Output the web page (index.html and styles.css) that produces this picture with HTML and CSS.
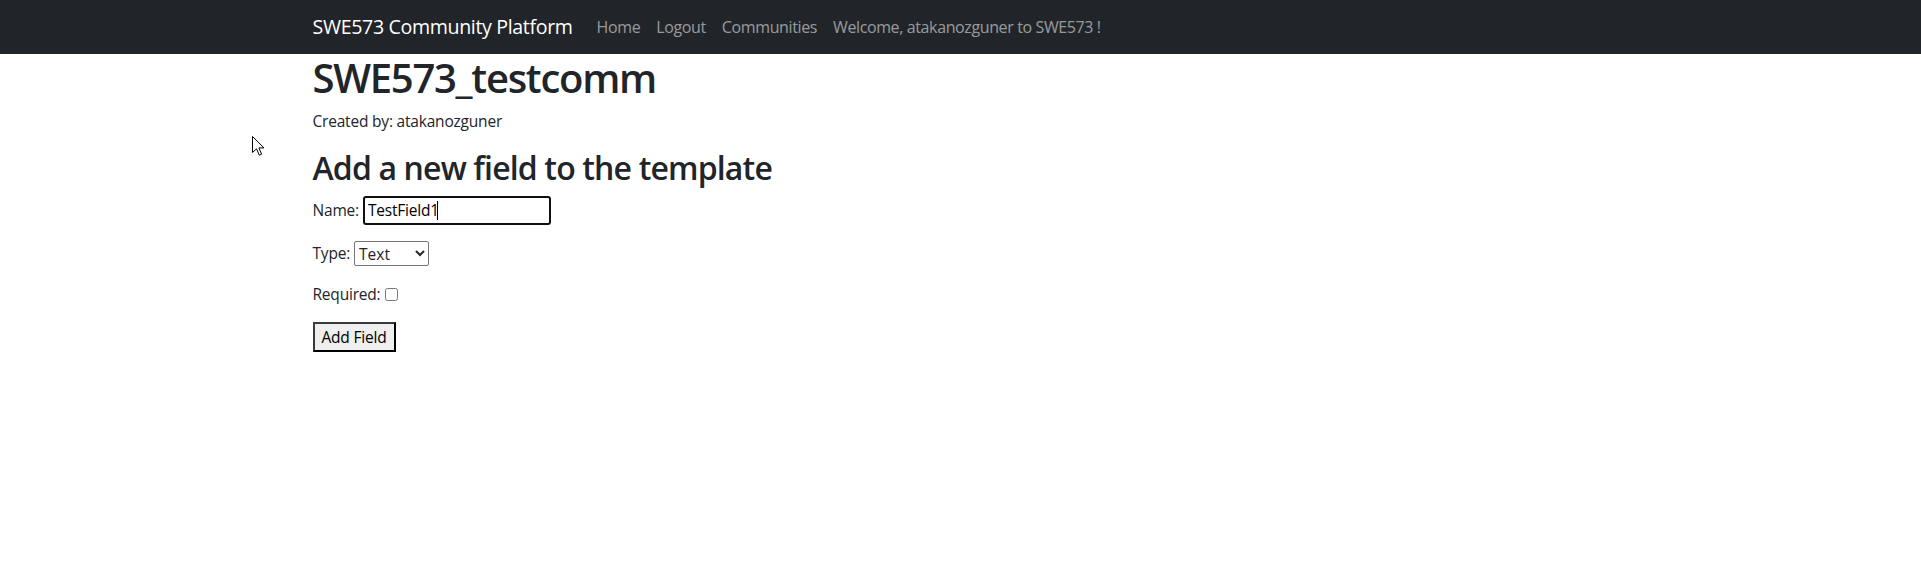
FILE: index.html
```html
<!DOCTYPE html>
<html lang="en">
<head>
<meta charset="utf-8">
<title>SWE573_testcomm</title>
<link rel="stylesheet" href="styles.css">
</head>
<body>
<nav class="navbar">
  <div class="container nav-inner">
    <a class="brand" href="#">SWE573 Community Platform</a>
    <a class="nav-link" href="#">Home</a>
    <a class="nav-link" href="#">Logout</a>
    <a class="nav-link" href="#">Communities</a>
    <span class="nav-link">Welcome, atakanozguner to SWE573 !</span>
  </div>
</nav>
<main class="container">
  <h1 class="title">SWE573_testcomm</h1>
  <p class="creator">Created by: atakanozguner</p>
  <h2 class="subtitle">Add a new field to the template</h2>
  <form class="field-form">
    <div class="row row-name">
      <label for="name">Name:</label>
      <span class="input-wrap">
        <input class="text-input" id="name" type="text" value="TestField1">
        <span class="caret"></span>
      </span>
    </div>
    <div class="row row-type">
      <label for="type">Type:</label>
      <select class="select" id="type">
        <option>Text</option>
        <option>Number</option>
        <option>Date</option>
      </select>
    </div>
    <div class="row row-req">
      <label for="req">Required:</label>
      <input class="check" id="req" type="checkbox">
    </div>
    <div class="row row-btn">
      <button class="btn" type="button">Add Field</button>
    </div>
  </form>
</main>
<svg class="cursor" width="13" height="20" viewBox="0 0 13 20" aria-hidden="true">
  <path d="M0.5 0.5 L0.5 16.5 L4.5 12.8 L7.3 19.2 L9.6 18.2 L6.9 11.9 L12 11.9 Z" fill="#fff" stroke="#000" stroke-width="1" stroke-linejoin="miter"/>
</svg>
</body>
</html>
```
FILE: styles.css
```css
html, body {
  margin: 0;
  padding: 0;
  background: #fff;
}
body {
  font-family: "Open Sans", "Noto Sans", sans-serif;
  font-size: 16px;
  line-height: 1.5;
  color: #212529;
  position: relative;
  min-height: 567px;
}
.container {
  max-width: 1320px;
  margin: 0 auto;
  padding: 0 12px;
  box-sizing: border-box;
}
.navbar {
  background: #212529;
  height: 54px;
}
.nav-inner {
  display: flex;
  align-items: center;
  height: 54px;
}
.brand {
  color: #fff;
  font-size: 19.6px;
  line-height: 30px;
  text-decoration: none;
  margin-right: 16px;
  letter-spacing: -0.35px;
}
.nav-link {
  color: rgba(255, 255, 255, 0.55);
  text-decoration: none;
  padding: 0 8px;
  line-height: 24px;
  letter-spacing: -0.38px;
}
.title {
  font-size: 40px;
  font-weight: 600;
  line-height: 48px;
  margin: 0 0 8px;
  letter-spacing: -1.27px;
}
.creator {
  margin: 0 0 16px;
  font-size: 15.5px;
  letter-spacing: -0.2px;
}
.subtitle {
  font-size: 32px;
  font-weight: 600;
  line-height: 38.4px;
  margin: 0 0 8px;
  letter-spacing: -0.85px;
}
.field-form {
  margin: 0;
}
.row {
  display: flex;
  align-items: center;
  gap: 4px;
  margin-bottom: 16px;
  font-size: 15.5px;
  letter-spacing: -0.2px;
}
.row-name {
  height: 29px;
}
.row-type {
  height: 25px;
  margin-top: 16.6px;
}
.row-req {
  height: 24px;
  gap: 5px;
}
.row-btn {
  height: 30px;
}
.input-wrap {
  position: relative;
  display: block;
  height: 29px;
}
.text-input {
  box-sizing: border-box;
  width: 188px;
  height: 29px;
  border: 2px solid #101010;
  border-radius: 3px;
  padding: 0 3px;
  margin: 0;
  font-family: inherit;
  font-size: 15.5px;
  letter-spacing: -0.2px;
  color: #000;
  outline: none;
  background: #fff;
}
.caret {
  position: absolute;
  left: 74px;
  top: 5px;
  width: 1px;
  height: 19px;
  background: #000;
}
.select {
  box-sizing: border-box;
  width: 75px;
  height: 25px;
  margin: 0;
  font-family: inherit;
  font-size: 15.5px;
  color: #212529;
  border: 1px solid #767676;
  border-radius: 2px;
  background: #fff;
}
.check {
  width: 13px;
  height: 13px;
  margin: 0;
}
.btn {
  box-sizing: border-box;
  width: 83px;
  height: 30px;
  margin: 0;
  padding: 0 6px;
  font-family: inherit;
  font-size: 15.5px;
  letter-spacing: -0.2px;
  color: #000;
  background: #efefef;
  border: 2px solid;
  border-color: #3a3a3a #000 #000 #3a3a3a;
  border-radius: 0;
}
.cursor {
  position: absolute;
  left: 252px;
  top: 136px;
}
```
